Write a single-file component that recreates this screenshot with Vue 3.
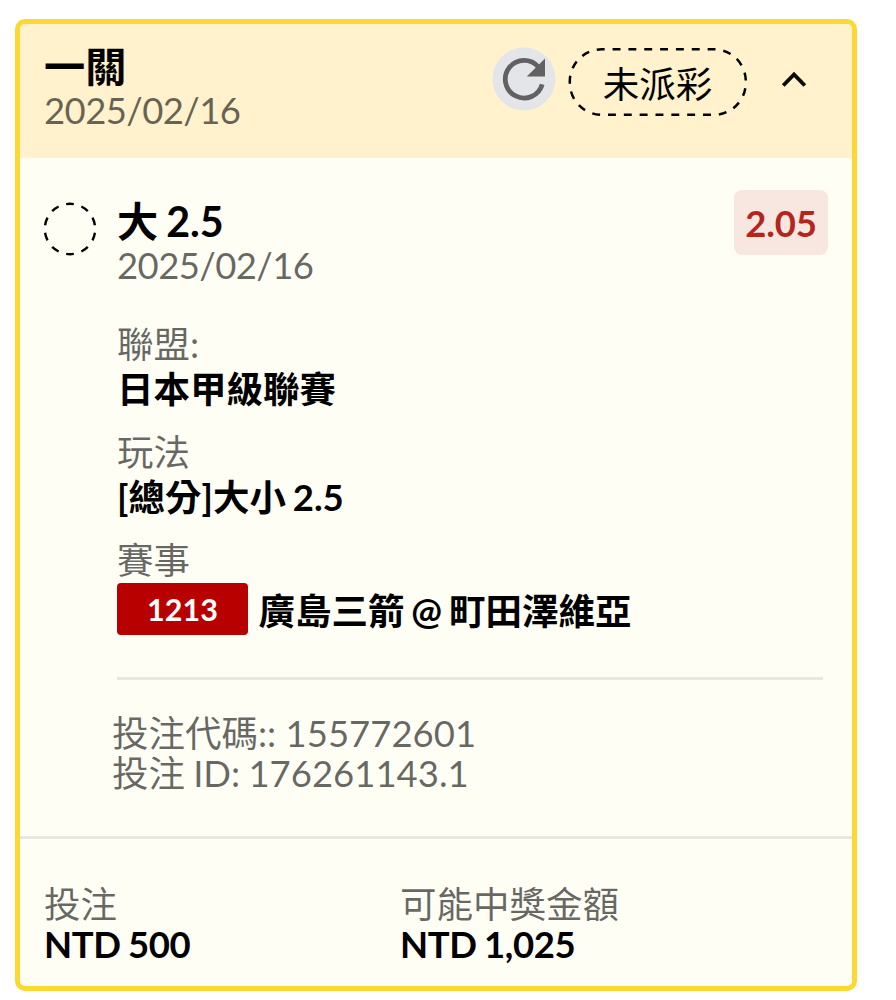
<script setup>
const details = [
  { label: '聯盟:', value: '日本甲級聯賽' },
  { label: '玩法', value: '[總分]大小 2.5' },
]
const totals = [
  { label: '投注', value: 'NTD 500' },
  { label: '可能中獎金額', value: 'NTD 1,025' },
]
</script>

<template>
  <article class="card">
    <header class="head">
      <div>
        <div class="title">一關</div>
        <div class="muted date">2025/02/16</div>
      </div>
      <div class="actions">
        <svg class="refresh" width="64" height="64" viewBox="0 0 64 64">
          <circle cx="32" cy="32" r="31.5" fill="#e4e5e8" />
          <path d="M50.2 37.3A18.8 18.8 0 1 1 46.4 20" fill="none" stroke="#616163" stroke-width="4.8" />
          <path d="M53 11.4V29.5H34.8Z" fill="#616163" />
        </svg>
        <div class="status">
          <svg class="outline" width="180" height="70" viewBox="0 0 180 70">
            <rect x="1.8" y="2.3" width="176" height="65.5" rx="32" fill="none" stroke="#000" stroke-width="2.5" pathLength="270" stroke-dasharray="5 5" stroke-dashoffset="3.2" />
          </svg>
          <span>未派彩</span>
        </div>
        <svg class="chevron" width="26" height="20" viewBox="0 0 26 20">
          <path d="M2.2 15.5L13 4.5L23.8 15.5" fill="none" stroke="#0c0a05" stroke-width="3.9" />
        </svg>
      </div>
    </header>

    <section class="body">
      <svg class="ring" width="56" height="56" viewBox="0 0 56 56">
        <circle cx="28" cy="28" r="25.2" fill="none" stroke="#000" stroke-width="2.4" pathLength="100" stroke-dasharray="5 5" stroke-dashoffset="-2.5" />
      </svg>
      <div class="content">
        <div class="pick">
          <div>
            <div class="title">大 2.5</div>
            <div class="muted date">2025/02/16</div>
          </div>
          <div class="odds">2.05</div>
        </div>
        <div v-for="d in details" :key="d.label" class="detail">
          <div class="label">{{ d.label }}</div>
          <div class="value">{{ d.value }}</div>
        </div>
        <div class="label">賽事</div>
        <div class="match">
          <span class="code">1213</span>
          <span class="teams">廣島三箭 @ 町田澤維亞</span>
        </div>
        <div class="ids muted">
          <div>投注代碼:: 155772601</div>
          <div class="bet-id">投注 ID: 176261143.1</div>
        </div>
      </div>
    </section>

    <footer class="foot">
      <div v-for="t in totals" :key="t.label">
        <div class="muted">{{ t.label }}</div>
        <div class="amount">{{ t.value }}</div>
      </div>
    </footer>
  </article>
</template>

<style>
body {
  background: #fff;
}
</style>

<style scoped>
.card {
  box-sizing: border-box;
  width: 842px;
  height: 972px;
  margin: 19px 0 0 15px;
  border: 5px solid #fdd835;
  border-radius: 10px;
  background: #fffef5;
  overflow: hidden;
  display: flex;
  flex-direction: column;
  font-family: Lato, "Noto Sans CJK TC", sans-serif;
  font-size: 36.5px;
  line-height: 40px;
  color: #000;
  white-space: nowrap;
}
.head {
  box-sizing: border-box;
  height: 133.5px;
  padding: 20px 45.5px 0 24px;
  background: #fff2cd;
  display: flex;
  justify-content: space-between;
}
.title {
  font-size: 41.2px;
  line-height: 45px;
  font-weight: 700;
  word-spacing: -2px;
}
.muted,
.label {
  color: rgba(0, 0, 0, 0.6);
  font-weight: 400;
}
.date {
  margin-top: 1px;
  letter-spacing: -0.6px;
}
.actions {
  display: flex;
  align-items: flex-start;
}
.refresh {
  margin-top: 3px;
}
.status {
  position: relative;
  width: 180px;
  height: 70px;
  margin: 3px 0 0 12px;
  text-align: center;
  line-height: 74px;
}
.outline {
  position: absolute;
  inset: 0;
}
.chevron {
  margin: 26px 0 0 33px;
}
.body {
  box-sizing: border-box;
  height: 678.5px;
  padding: 32.5px 24px 0 22px;
  display: flex;
}
.ring {
  flex: none;
  margin-top: 11px;
}
.content {
  flex: 1;
  margin-left: 19px;
}
.pick {
  display: flex;
  justify-content: space-between;
  height: 131.5px;
}
.pick .title {
  margin-top: 8.5px;
}
.odds {
  width: 94px;
  height: 65px;
  border-radius: 8px;
  background: #f8e7e0;
  color: #b3261e;
  font-weight: 700;
  line-height: 66px;
  letter-spacing: -0.2px;
  text-align: center;
}
.label {
  line-height: 45px;
}
.value {
  line-height: 44px;
  font-weight: 700;
  word-spacing: -2px;
}
.detail {
  margin-bottom: 19px;
}
.match {
  display: flex;
  align-items: flex-start;
  height: 97px;
  margin-right: 5px;
  box-sizing: border-box;
  border-bottom: 3px solid #e9e7e1;
}
.code {
  width: 131px;
  height: 52px;
  border-radius: 4px;
  background: #b80000;
  color: #fff;
  font-size: 30.5px;
  font-weight: 700;
  line-height: 53px;
  text-align: center;
}
.teams {
  margin-left: 10.5px;
  line-height: 56px;
  font-weight: 700;
  word-spacing: -2px;
}
.ids {
  margin: 33px 0 0 -5px;
}
.bet-id {
  word-spacing: -1.2px;
}
.foot {
  flex: 1;
  border-top: 3px solid #e9e7e1;
  padding: 45px 24px 0;
  display: grid;
  grid-template-columns: 356px 1fr;
}
.amount {
  font-weight: 700;
  letter-spacing: -0.4px;
  word-spacing: -1px;
}
</style>
